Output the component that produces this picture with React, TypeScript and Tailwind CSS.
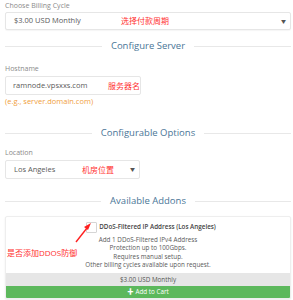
import React from "react";

const font = { fontFamily: '"Open Sans", "Noto Sans CJK SC", sans-serif' };

function Divider({ title }: { title: string }) {
  return (
    <div className="flex items-center gap-[9px]">
      <div className="h-px flex-1 bg-[#e8e8e8]" />
      <div className="text-[9.5px] leading-[12px] text-[#4a7697]">{title}</div>
      <div className="h-px flex-1 bg-[#e8e8e8]" />
    </div>
  );
}

function Caret() {
  return <span className="text-[5px] leading-none text-[#555]">▼</span>;
}

export default function App() {
  return (
    <div
      className="relative w-[293px] h-[300px] overflow-hidden bg-white pl-[5px] pr-[2px] pt-[1px]"
      style={font}
    >
      <div className="text-[7px] leading-[9px] text-[#8a8a8a]">Choose Billing Cycle</div>
      <div className="mt-[2px] flex h-[18px] items-center rounded-[2px] border border-[#e6e6e6] bg-white pl-[8px] pr-[4px] shadow-[0_1px_1px_rgba(0,0,0,0.04)]">
        <span className="w-[107px] text-[7.5px] text-[#5a5a5a]">$3.00 USD Monthly</span>
        <span className="text-[8px] text-[#ff3030]">选择付款周期</span>
        <span className="flex-1" />
        <Caret />
      </div>

      <div className="mt-[10px]">
        <Divider title="Configure Server" />
      </div>

      <div className="mt-[12px] text-[7px] leading-[9px] text-[#8a8a8a]">Hostname</div>
      <div className="mt-[3px] flex h-[19px] w-[136px] items-center rounded-[2px] border border-[#e6e6e6] bg-white pl-[7px]">
        <span className="w-[95px] text-[7.5px] text-[#5a5a5a]">ramnode.vpsxxs.com</span>
        <span className="text-[8px] text-[#ff3030]">服务器名</span>
      </div>
      <div className="mt-[1px] text-[7.5px] leading-[10px] text-[#f0a040]">(e.g., server.domain.com)</div>

      <div className="mt-[21px]">
        <Divider title="Configurable Options" />
      </div>

      <div className="mt-[9px] text-[7px] leading-[9px] text-[#8a8a8a]">Location</div>
      <div className="mt-[3px] flex h-[19px] w-[135px] items-center rounded-[2px] border border-[#e6e6e6] bg-white pl-[8px] pr-[4px]">
        <span className="w-[68px] text-[7.5px] text-[#5a5a5a]">Los Angeles</span>
        <span className="text-[8px] text-[#ff3030]">机房位置</span>
        <span className="flex-1" />
        <Caret />
      </div>

      <div className="mt-[16px]">
        <Divider title="Available Addons" />
      </div>

      <div className="mt-[9px] overflow-hidden rounded-[2px] border border-[#eeeeee] bg-white shadow-[0_1px_2px_rgba(0,0,0,0.08)]">
        <div className="flex flex-col items-center pt-[5px] pb-[4px] text-[6.3px] leading-[8.3px] text-[#5a5a5a]">
          <div className="flex h-[11px] items-center gap-[2px] pl-[6px]">
            <span className="h-[11px] w-[11px] rounded-[1px] border border-[#d5d5d5] bg-white" />
            <span className="font-semibold text-[#444]">DDoS-Filtered IP Address (Los Angeles)</span>
          </div>
          <div className="mt-[3px]">Add 1 DDoS-Filtered IPv4 Address</div>
          <div>Protection up to 100Gbps.</div>
          <div>Requires manual setup.</div>
          <div>Other billing cycles available upon request.</div>
        </div>
        <div className="flex h-[13px] items-center justify-center bg-[#e6e6e6] text-[6.3px] text-[#555]">
          $3.00 USD Monthly
        </div>
        <div className="flex h-[12px] items-center justify-center gap-[2px] bg-[#5cb85c] text-[6.3px] text-white">
          <span className="font-bold">✚</span>
          <span>Add to Cart</span>
        </div>
      </div>

      <div className="absolute left-[7px] top-[248px] text-[8px] leading-[10px] text-[#ff3030]">是否添加DDOS防御</div>
      <svg className="absolute left-[70px] top-[219px]" width="26" height="26" viewBox="0 0 26 26">
        <path d="M6 23 L17 9" stroke="#ff2020" strokeWidth="1.4" fill="none" />
        <path d="M21 4 L14 8 L18 11 Z" fill="#ff2020" />
      </svg>
    </div>
  );
}
